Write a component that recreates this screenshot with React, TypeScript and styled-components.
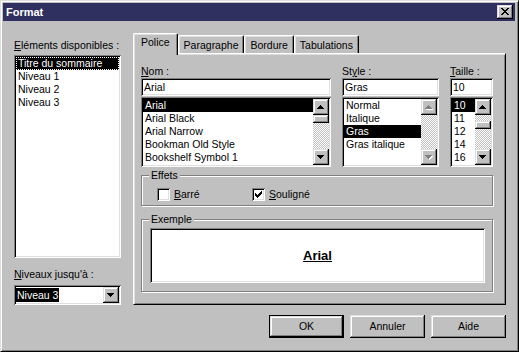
import React from 'react';
import styled, { createGlobalStyle, css } from 'styled-components';

const GlobalStyle = createGlobalStyle`
  html, body { margin: 0; padding: 0; background: #c0c0c0; }
  body { font-family: "Liberation Sans", Arial, sans-serif; font-size: 10.5px; color: #000; }
  * { box-sizing: border-box; }
`;

const raised = css`
  box-shadow: inset -1px -1px #000, inset 1px 1px #dfdfdf, inset -2px -2px #808080, inset 2px 2px #fff;
`;
const sunken = css`
  box-shadow: inset 1px 1px #808080, inset -1px -1px #fff, inset 2px 2px #000, inset -2px -2px #dfdfdf;
`;

const Window = styled.div`
  width: 519px;
  height: 352px;
  background: #c0c0c0;
  border: 1px solid;
  border-color: #dfdfdf #000 #000 #dfdfdf;
  box-shadow: inset 1px 1px #fff, inset -1px -1px #808080;
  padding: 2px 3px 3px 2px;
  display: flex;
  flex-direction: column;
`;

const TitleBar = styled.div`
  height: 18px;
  background: #303060;
  display: flex;
  align-items: center;
  justify-content: space-between;
  padding: 0 2px 0 3px;
`;

const TitleText = styled.span`
  color: #fff;
  font-weight: bold;
  font-size: 11px;
  line-height: 13px;
`;

const CloseButton = styled.div`
  width: 16px;
  height: 14px;
  background: #c0c0c0;
  ${raised};
  display: flex;
  align-items: center;
  justify-content: center;
  padding: 0 1px 1px 0;
`;

const Body = styled.div`
  flex: 1;
  display: flex;
  flex-direction: column;
  padding: 12px 9px 10px 11px;
`;

const MainRow = styled.div`
  display: flex;
  gap: 12px;
`;

const LeftColumn = styled.div`
  width: 107px;
  padding-top: 6px;
  display: flex;
  flex-direction: column;
`;

const Label = styled.div<{ $gap?: number }>`
  height: 13px;
  line-height: 13px;
  white-space: nowrap;
  margin-top: ${p => p.$gap ?? 0}px;
  margin-bottom: ${p => (p.$gap !== undefined ? 4 : 0)}px;
`;

const ListBox = styled.div<{ $height: number; $gap?: number }>`
  height: ${p => p.$height}px;
  margin-top: ${p => p.$gap ?? 0}px;
  background: #fff;
  ${sunken};
  padding: 2px;
  display: flex;
`;

const Items = styled.div`
  flex: 1;
  overflow: hidden;
  display: flex;
  flex-direction: column;
`;

const ListItem = styled.div<{ $selected?: boolean; $focus?: boolean }>`
  height: 13px;
  flex: none;
  line-height: 13px;
  padding-left: 2px;
  white-space: nowrap;
  ${p => p.$selected && css`background: #000; color: #fff;`}
  ${p => p.$focus && css`outline: 1px dotted #fff; outline-offset: -1px;`}
`;

const Combo = styled.div`
  height: 20px;
  background: #fff;
  ${sunken};
  padding: 2px;
  display: flex;
  align-items: center;
  justify-content: space-between;
`;

const ComboValue = styled.span`
  background: #000;
  color: #fff;
  line-height: 14px;
  padding: 0 1px;
`;

const ScrollBtn = styled.div`
  width: 16px;
  height: 16px;
  flex: none;
  background: #c0c0c0;
  ${raised};
  display: flex;
  align-items: center;
  justify-content: center;
`;

const PanelArea = styled.div`
  width: 373px;
  display: flex;
  flex-direction: column;
`;

const TabStrip = styled.div`
  height: 20px;
  display: flex;
  align-items: flex-end;
`;

const Tab = styled.div<{ $active?: boolean }>`
  position: relative;
  background: #c0c0c0;
  border-top: 1px solid #fff;
  border-left: 1px solid #fff;
  border-right: 1px solid #000;
  border-radius: 2px 2px 0 0;
  box-shadow: inset -1px 0 #808080, inset 1px 1px #dfdfdf;
  line-height: 13px;
  white-space: nowrap;
  ${p =>
    p.$active
      ? css`
          height: 22px;
          margin-bottom: -2px;
          padding: 2px 7px 0 7px;
          z-index: 1;
        `
      : css`
          height: 18px;
          padding: 3px 5px 0 5px;
        `}
`;

const Panel = styled.div`
  height: 252px;
  border: 1px solid;
  border-color: #fff #000 #000 #fff;
  box-shadow: inset 1px 1px #dfdfdf, inset -1px -1px #808080;
  padding: 11px 10px 0 7px;
  display: flex;
  flex-direction: column;
`;

const FieldRow = styled.div`
  display: flex;
  gap: 11px;
`;

const FieldColumn = styled.div<{ $width: number }>`
  width: ${p => p.$width}px;
  display: flex;
  flex-direction: column;
`;

const TextBox = styled.div`
  height: 18px;
  margin-bottom: 1px;
  background: #fff;
  ${sunken};
  padding: 2px 3px;
  line-height: 14px;
  white-space: nowrap;
`;

const ScrollBar = styled.div`
  width: 16px;
  flex: none;
  display: flex;
  flex-direction: column;
`;

const Track = styled.div`
  flex: 1;
  display: flex;
  flex-direction: column;
  background: repeating-conic-gradient(#c0c0c0 0 25%, #fff 0 50%) 0 0 / 2px 2px;
`;

const Thumb = styled.div<{ $offset: number }>`
  height: 8px;
  margin-top: ${p => p.$offset}px;
  background: #c0c0c0;
  ${raised};
`;

const GroupBox = styled.div<{ $gap: number; $height: number }>`
  position: relative;
  width: 352px;
  height: ${p => p.$height}px;
  margin-top: ${p => p.$gap}px;
  border: 1px solid #808080;
  box-shadow: inset 1px 1px #fff, 1px 1px #fff;
`;

const Caption = styled.span`
  position: absolute;
  top: -7px;
  left: 7px;
  padding: 0 2px;
  background: #c0c0c0;
  line-height: 13px;
`;

const CheckRow = styled.div`
  display: grid;
  grid-template-columns: 95px auto;
  padding: 12px 0 0 15px;
`;

const CheckItem = styled.div`
  display: flex;
  align-items: center;
  gap: 4px;
  line-height: 13px;
`;

const CheckBox = styled.div`
  width: 13px;
  height: 13px;
  background: #fff;
  ${sunken};
  display: flex;
  align-items: center;
  justify-content: center;
`;

const SampleWrap = styled.div`
  padding: 8px 7px 0 8px;
`;

const Sample = styled.div`
  height: 55px;
  background: #fff;
  ${sunken};
  display: flex;
  align-items: center;
  justify-content: center;
  font-weight: bold;
  font-size: 13px;
  text-decoration: underline;
`;

const ButtonRow = styled.div`
  margin-top: 10px;
  display: flex;
  justify-content: flex-end;
  gap: 6px;
`;

const Button = styled.div<{ $default?: boolean }>`
  width: 75px;
  height: 23px;
  background: #c0c0c0;
  display: flex;
  align-items: center;
  justify-content: center;
  line-height: 13px;
  ${raised};
  ${p =>
    p.$default &&
    css`
      border: 1px solid #000;
    `}
`;

const UP = 'M3 0h1v1h1v1h1v1h1v1H0V3h1V2h1V1h1z';
const DOWN = 'M0 0h7v1h-1v1h-1v1h-1v1h-1v-1h-1v-1h-1v-1h-1z';

const Arrow = ({ dir, disabled }: { dir: 'up' | 'down'; disabled?: boolean }) => (
  <svg width="8" height="5" viewBox="0 0 8 5" style={{ display: 'block' }}>
    {disabled && <path d={dir === 'up' ? UP : DOWN} fill="#fff" transform="translate(1 1)" />}
    <path d={dir === 'up' ? UP : DOWN} fill={disabled ? '#808080' : '#000'} />
  </svg>
);

const CloseGlyph = () => (
  <svg width="8" height="7" viewBox="0 0 8 7" style={{ display: 'block' }}>
    <path
      d="M0 0h2v1H0z M6 0h2v1H6z M1 1h2v1H1z M5 1h2v1H5z M2 2h4v1H2z M3 3h2v1H3z M2 4h4v1H2z M1 5h2v1H1z M5 5h2v1H5z M0 6h2v1H0z M6 6h2v1H6z"
      fill="#000"
    />
  </svg>
);

const CheckGlyph = () => (
  <svg width="7" height="7" viewBox="0 0 7 7" style={{ display: 'block' }}>
    <path
      d="M6 0h1v1H6z M5 1h2v1H5z M0 2h1v1H0z M4 2h3v1H4z M0 3h2v1H0z M3 3h3v1H3z M0 4h5v1H0z M1 5h3v1H1z M2 6h1v1H2z"
      fill="#000"
    />
  </svg>
);

const Scroll = ({ thumb, disabled }: { thumb?: number; disabled?: boolean }) => (
  <ScrollBar>
    <ScrollBtn>
      <Arrow dir="up" disabled={disabled} />
    </ScrollBtn>
    <Track>{thumb !== undefined && <Thumb $offset={thumb} />}</Track>
    <ScrollBtn>
      <Arrow dir="down" disabled={disabled} />
    </ScrollBtn>
  </ScrollBar>
);

const fonts = ['Arial', 'Arial Black', 'Arial Narrow', 'Bookman Old Style', 'Bookshelf Symbol 1'];
const styles = ['Normal', 'Italique', 'Gras', 'Gras italique'];
const sizes = ['10', '11', '12', '14', '16'];

export default function App() {
  return (
    <>
      <GlobalStyle />
      <Window>
        <TitleBar>
          <TitleText>Format</TitleText>
          <CloseButton>
            <CloseGlyph />
          </CloseButton>
        </TitleBar>
        <Body>
          <MainRow>
            <LeftColumn>
              <Label>
                <u>E</u>léments disponibles :
              </Label>
              <ListBox $height={203} $gap={3}>
                <Items>
                  <ListItem $selected $focus>Titre du sommaire</ListItem>
                  <ListItem>Niveau 1</ListItem>
                  <ListItem>Niveau 2</ListItem>
                  <ListItem>Niveau 3</ListItem>
                </Items>
              </ListBox>
              <Label $gap={10}>
                <u>N</u>iveaux jusqu'à :
              </Label>
              <Combo>
                <ComboValue>Niveau 3</ComboValue>
                <ScrollBtn>
                  <Arrow dir="down" />
                </ScrollBtn>
              </Combo>
            </LeftColumn>
            <PanelArea>
              <TabStrip>
                <Tab $active>Police</Tab>
                <Tab>Paragraphe</Tab>
                <Tab>Bordure</Tab>
                <Tab>Tabulations</Tab>
              </TabStrip>
              <Panel>
                <FieldRow>
                  <FieldColumn $width={190}>
                    <Label>
                      <u>N</u>om :
                    </Label>
                    <TextBox>Arial</TextBox>
                    <ListBox $height={70}>
                      <Items>
                        {fonts.map((f, i) => (
                          <ListItem key={f} $selected={i === 0}>
                            {f}
                          </ListItem>
                        ))}
                      </Items>
                      <Scroll thumb={0} />
                    </ListBox>
                  </FieldColumn>
                  <FieldColumn $width={97}>
                    <Label>
                      St<u>y</u>le :
                    </Label>
                    <TextBox>Gras</TextBox>
                    <ListBox $height={70}>
                      <Items>
                        {styles.map(s => (
                          <ListItem key={s} $selected={s === 'Gras'}>
                            {s}
                          </ListItem>
                        ))}
                      </Items>
                      <Scroll disabled />
                    </ListBox>
                  </FieldColumn>
                  <FieldColumn $width={43}>
                    <Label>
                      <u>T</u>aille :
                    </Label>
                    <TextBox>10</TextBox>
                    <ListBox $height={70}>
                      <Items>
                        {sizes.map((s, i) => (
                          <ListItem key={s} $selected={i === 0}>
                            {s}
                          </ListItem>
                        ))}
                      </Items>
                      <Scroll thumb={6} />
                    </ListBox>
                  </FieldColumn>
                </FieldRow>
                <GroupBox $gap={8} $height={31}>
                  <Caption>Effets</Caption>
                  <CheckRow>
                    <CheckItem>
                      <CheckBox />
                      <span>
                        <u>B</u>arré
                      </span>
                    </CheckItem>
                    <CheckItem>
                      <CheckBox>
                        <CheckGlyph />
                      </CheckBox>
                      <span>
                        <u>S</u>ouligné
                      </span>
                    </CheckItem>
                  </CheckRow>
                </GroupBox>
                <GroupBox $gap={13} $height={73}>
                  <Caption>Exemple</Caption>
                  <SampleWrap>
                    <Sample>Arial</Sample>
                  </SampleWrap>
                </GroupBox>
              </Panel>
            </PanelArea>
          </MainRow>
          <ButtonRow>
            <Button $default>OK</Button>
            <Button>Annuler</Button>
            <Button>Aide</Button>
          </ButtonRow>
        </Body>
      </Window>
    </>
  );
}
